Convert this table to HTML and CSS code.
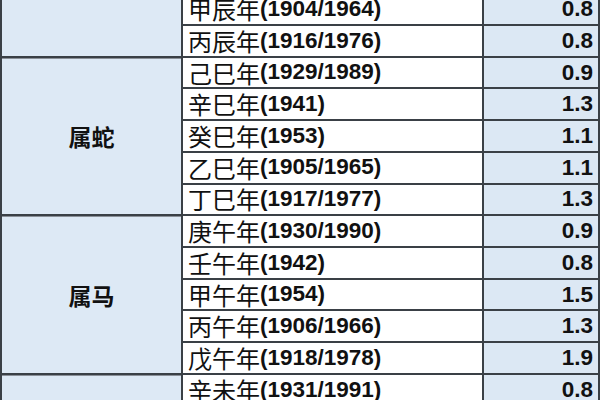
FILE: index.html
```html
<!DOCTYPE html>
<html lang="zh">
<head>
<meta charset="utf-8">
<title>称骨表</title>
<link rel="stylesheet" href="styles.css">
</head>
<body>
<div class="sheet">
  <div class="zodiac span2"></div>
  <div class="year"><span class="gz">甲辰年</span><span class="yr">(1904/1964)</span></div><div class="val">0.8</div>
  <div class="year"><span class="gz">丙辰年</span><span class="yr">(1916/1976)</span></div><div class="val">0.8</div>

  <div class="zodiac span5">属蛇</div>
  <div class="year"><span class="gz">己巳年</span><span class="yr">(1929/1989)</span></div><div class="val">0.9</div>
  <div class="year"><span class="gz">辛巳年</span><span class="yr">(1941)</span></div><div class="val">1.3</div>
  <div class="year"><span class="gz">癸巳年</span><span class="yr">(1953)</span></div><div class="val">1.1</div>
  <div class="year"><span class="gz">乙巳年</span><span class="yr">(1905/1965)</span></div><div class="val">1.1</div>
  <div class="year"><span class="gz">丁巳年</span><span class="yr">(1917/1977)</span></div><div class="val">1.3</div>

  <div class="zodiac span5">属马</div>
  <div class="year"><span class="gz">庚午年</span><span class="yr">(1930/1990)</span></div><div class="val">0.9</div>
  <div class="year"><span class="gz">壬午年</span><span class="yr">(1942)</span></div><div class="val">0.8</div>
  <div class="year"><span class="gz">甲午年</span><span class="yr">(1954)</span></div><div class="val">1.5</div>
  <div class="year"><span class="gz">丙午年</span><span class="yr">(1906/1966)</span></div><div class="val">1.3</div>
  <div class="year"><span class="gz">戊午年</span><span class="yr">(1918/1978)</span></div><div class="val">1.9</div>

  <div class="zodiac span1"></div>
  <div class="year"><span class="gz">辛未年</span><span class="yr">(1931/1991)</span></div><div class="val">0.8</div>
</div>
</body>
</html>
```

FILE: styles.css
```css
html, body {
  margin: 0;
  padding: 0;
  background: #ffffff;
  overflow: hidden;
}

.sheet {
  width: 600px;
  box-sizing: border-box;
  margin-top: -7.73px;
  display: grid;
  grid-template-columns: 179px 299px 114px;
  grid-auto-rows: 29.73px;
  gap: 2px;
  padding: 2px;
  background: #3a4046;
  color: #111;
}

.zodiac {
  grid-column: 1;
  background: #dde9f5;
  display: flex;
  align-items: center;
  justify-content: center;
  font-family: "Noto Sans CJK SC", sans-serif;
  font-weight: 700;
  font-size: 23px;
  box-shadow: inset 0 1px 0 #8a9098;
}

.span1 { grid-row: span 1; }
.span2 { grid-row: span 2; }
.span5 { grid-row: span 5; }

.year {
  grid-column: 2;
  background: #ffffff;
  display: flex;
  align-items: center;
  padding-left: 5px;
  white-space: nowrap;
}

.gz {
  font-family: "Noto Sans CJK SC", sans-serif;
  font-weight: 400;
  font-size: 24px;
  line-height: 1;
}

.yr {
  font-family: "Liberation Sans", Arial, sans-serif;
  font-weight: 700;
  font-size: 22.5px;
  line-height: 1;
}

.val {
  grid-column: 3;
  background: #dce8f4;
  display: flex;
  align-items: center;
  justify-content: flex-end;
  padding-right: 5px;
  font-family: "Liberation Sans", Arial, sans-serif;
  font-weight: 700;
  font-size: 22.5px;
}
```
